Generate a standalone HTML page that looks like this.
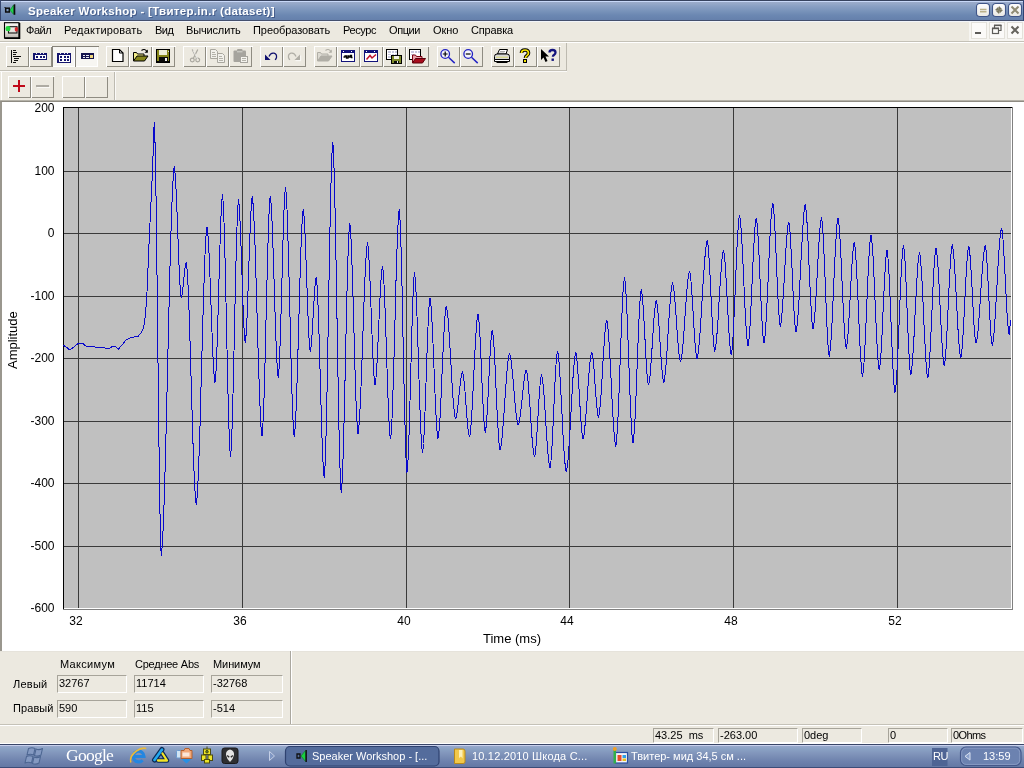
<!DOCTYPE html>
<html><head><meta charset="utf-8"><title>Speaker Workshop</title>
<style>
html,body{margin:0;padding:0;}
body{width:1024px;height:768px;overflow:hidden;position:relative;background:#ece9e0;font-family:"Liberation Sans",sans-serif;font-size:11px;color:#000;}
.abs{position:absolute;}
.t{position:absolute;white-space:nowrap;line-height:14px;}
.t,.yl,.xl,.fld{will-change:transform;}
/* title bar */
#title{left:0;top:0;width:1024px;height:21px;background:linear-gradient(#36425e 0,#36425e 1px,#c8d8f8 1px,#c8d8f8 2px,#9cacca 2px,#94a7c8 4px,#8aa0c4 6px,#7c96bc 10px,#6c88b2 15px,#6580ac 20px,#44506e 20px,#44506e 21px);}
#title .txt{left:28px;top:4px;color:#fff;font-weight:bold;font-size:11.5px;line-height:15px;letter-spacing:.31px;text-shadow:1px 1px 0 rgba(40,60,110,.6);}
.capbtn{position:absolute;top:5px;width:14px;height:13px;border-radius:3px;background:linear-gradient(#f4f4f2,#c8c8c4);border:1px solid #e9eefa;box-shadow:0 0 0 1px #50669a;}
/* menu */
#menu{left:0;top:21px;width:1024px;height:20px;background:#ece9e0;}
#menu .t{top:2px;font-size:11px;}
/* toolbars */
.btn{position:absolute;width:22px;height:21px;background:#ece9e0;border-top:1px solid #fff;border-left:1px solid #fff;border-right:1px solid #8a887e;border-bottom:1px solid #8a887e;box-sizing:border-box;}
.btn.dn{background:#f6f5f0;border-top:1px solid #8a887e;border-left:1px solid #8a887e;border-right:1px solid #fff;border-bottom:1px solid #fff;}
/* chart */
#chart{left:0;top:101px;width:1024px;height:550px;background:#fff;border-top:1px solid #8e8b82;border-left:2px solid #9a978e;box-sizing:border-box;}
.yl{position:absolute;width:54.5px;left:0;text-align:right;font-size:12px;line-height:12px;white-space:nowrap;}
.xl{position:absolute;top:615px;width:30px;text-align:center;font-size:12px;line-height:12px;white-space:nowrap;}
/* panel */
.fld{position:absolute;height:18px;box-sizing:border-box;border-top:1px solid #a7a49a;border-left:1px solid #a7a49a;border-right:1px solid #fff;border-bottom:1px solid #fff;background:#ece9e0;font-size:11px;line-height:15px;padding-left:1px;white-space:nowrap;}
/* taskbar */
#task{left:0;top:744px;width:1024px;height:24px;background:linear-gradient(#3a4668 0,#3a4668 1px,#c8d0ec 1px,#c8d0ec 2px,#98a8cc 2px,#8aa2c4 5px,#8296bc 9px,#768ab2 14px,#6c80ac 18px,#6478a4 23px,#3c4c78 23px,#3c4c78 24px);}
#task .t{color:#fff;font-size:11px;top:5px;}
</style></head><body>

<!-- TITLE BAR -->
<div id="title" class="abs">
  <div class="abs" style="left:0;top:0;width:1px;height:21px;background:#36466e"></div>
  <svg class="abs" style="left:0;top:0" width="24" height="21" viewBox="0 0 24 21">
    <rect x="5.700" y="8.200" width="3.600" height="3.800" fill="none" stroke="#0c0c0c" stroke-width="1.500"/>
    <path d="M4.500 7.500h2" stroke="#0c0c0c" stroke-width="1" stroke-dasharray="1 1"/>
    <path d="M10 10.200L13.500 5V14.300z" fill="#1ed24a" stroke="#0b8a2a" stroke-width=".7"/>
    <path d="M14.500 4.300v10.500" stroke="#0c0c0c" stroke-width="1.600"/>
  </svg>
  <div class="t txt">Speaker Workshop - [Твитер.in.r (dataset)]</div>
  <svg class="abs" style="left:960px;top:0" width="64" height="21" viewBox="960 0 64 21">
    <defs><linearGradient id="cb" x1="0" y1="0" x2="0" y2="1"><stop offset="0" stop-color="#fdfdfe"/><stop offset=".55" stop-color="#f3f3f1"/><stop offset="1" stop-color="#e9e8e2"/></linearGradient></defs>
    <rect x="1023" y="0" width="1" height="21" fill="#2f4273"/>
    <g fill="url(#cb)" stroke="#3f5589" stroke-width="1.100">
      <rect x="976.500" y="3.500" width="13" height="13" rx="3.200"/>
      <rect x="992.500" y="3.500" width="13" height="13" rx="3.200"/>
      <rect x="1008.500" y="3.500" width="13" height="13" rx="3.200"/>
    </g>
    <path d="M980 9.500h6.500M980 11.700h6.500" stroke="#b9b08a" stroke-width="1.500"/>
    <path d="M999 10V6l3.500 3.500zM999 10h4l-3.500 3.500zM999 10v4l-3.500-3.500zM999 10h-4l3.500-3.500z" fill="#7b7860"/>
    <path d="M1011.500 6.500l7 7M1018.500 6.500l-7 7" stroke="#8f8b74" stroke-width="2"/>
  </svg>
</div>

<!-- MENU BAR -->
<div class="abs" style="left:0;top:21px;width:1024px;height:1px;background:#f2f5fa;z-index:3"></div>
<div id="menu" class="abs">
  <svg class="abs" style="left:0;top:0" width="24" height="20" viewBox="0 21 24 20">
    <defs><linearGradient id="mi" x1="0" y1="0" x2="0" y2="1"><stop offset="0" stop-color="#f6f4f0"/><stop offset=".55" stop-color="#e6e2dc"/><stop offset="1" stop-color="#b9b4ae"/></linearGradient></defs>
    <rect x="4.500" y="22.700" width="14.500" height="15.300" fill="url(#mi)" stroke="#000" stroke-width="1.100"/>
    <path d="M4.500 38.300H19.500V23" fill="none" stroke="#000" stroke-width="1.600"/>
    <rect x="8.500" y="26.700" width="8.500" height="6.300" fill="none" stroke="#141414" stroke-width="1.100"/>
    <rect x="5.500" y="26" width="5" height="5.200" rx="2.300" fill="#22d63c"/>
    <rect x="14.800" y="27" width="3" height="4.500" rx="1.500" fill="#d8262a"/>
  </svg>
  <div class="t" style="left:26px;letter-spacing:-0.46px">Файл</div>
  <div class="t" style="left:63.5px;letter-spacing:0.19px">Редактировать</div>
  <div class="t" style="left:154.5px;letter-spacing:-0.47px">Вид</div>
  <div class="t" style="left:185.7px;letter-spacing:-0.15px">Вычислить</div>
  <div class="t" style="left:252.7px;letter-spacing:-0.07px">Преобразовать</div>
  <div class="t" style="left:342.6px;letter-spacing:-0.39px">Ресурс</div>
  <div class="t" style="left:389px;letter-spacing:-0.42px">Опции</div>
  <div class="t" style="left:433px;letter-spacing:-0.07px">Окно</div>
  <div class="t" style="left:471px;letter-spacing:-0.16px">Справка</div>
  <!-- mdi buttons -->
  <svg class="abs" style="left:960px;top:0" width="64" height="20" viewBox="960 21 64 20">
    <rect x="969" y="21" width="55" height="20" fill="#f6f5f1"/>
    <g fill="#fbfaf8" stroke="#e3e1da" stroke-width="1"><rect x="971.500" y="22.500" width="15" height="16"/><rect x="989.500" y="22.500" width="15" height="16"/><rect x="1007.500" y="22.500" width="15" height="16"/></g>
    <rect x="975" y="32" width="6" height="2" fill="#5c5b58"/>
    <path d="M994.500 30v-4.500h6.500v5h-2" fill="none" stroke="#5c5b58" stroke-width="1.200"/><path d="M994 25.300h7.500" stroke="#5c5b58" stroke-width="1.600"/>
    <rect x="992.500" y="28.500" width="6" height="5" fill="#fbfaf8" stroke="#5c5b58" stroke-width="1.200"/><path d="M992 28.300h7" stroke="#5c5b58" stroke-width="1.600"/>
    <path d="M1011.500 26.500l7 7M1018.500 26.500l-7 7" stroke="#66645e" stroke-width="2.100"/>
  </svg>
</div>
<div class="abs" style="left:0;top:41px;width:1024px;height:1px;background:#c9c6bc"></div>
<div class="abs" style="left:0;top:42px;width:1024px;height:1px;background:#fff"></div>

<!-- TOOLBAR 1 -->
<div id="tb1" class="abs" style="left:0;top:43px;width:1024px;height:29px;">
<svg class="abs" style="left:0;top:-2px" width="1024" height="62" viewBox="0 41 1024 62" shape-rendering="crispEdges">
<rect x="0" y="41" width="1024" height="1" fill="#c4c1b7"/><rect x="0" y="42" width="1024" height="1" fill="#fff"/>
<rect x="0" y="70" width="567" height="1" fill="#c4c1b7"/><rect x="0" y="71" width="567" height="1" fill="#fbfaf8"/>
<rect x="0" y="100" width="1024" height="1" fill="#b5b2a8"/>
<rect x="566" y="43" width="1" height="28" fill="#bdbab0"/>
<rect x="114" y="72" width="1" height="28" fill="#bdbab0"/><rect x="115" y="72" width="1" height="28" fill="#fbfaf8"/>
<rect x="1" y="72" width="1" height="28" fill="#fff"/>
<rect x="6" y="46" width="23" height="21" fill="#ece9e0"/><path d="M6 66.5V46.5H29" transform="translate(.5 0)" fill="none" stroke="#ffffff"/><path d="M6.5 66.5H28.5V46.5" fill="none" stroke="#8f8c82"/>
<rect x="29" y="46" width="23" height="21" fill="#ece9e0"/><path d="M29 66.5V46.5H52" transform="translate(.5 0)" fill="none" stroke="#ffffff"/><path d="M29.5 66.5H51.5V46.5" fill="none" stroke="#8f8c82"/>
<rect x="52" y="46" width="23" height="21" fill="#f7f6f2"/><path d="M52 66.5V46.5H75" transform="translate(.5 0)" fill="none" stroke="#86837a"/><path d="M52.5 66.5H74.5V46.5" fill="none" stroke="#ffffff"/>
<rect x="75" y="46" width="23" height="21" fill="#f7f6f2"/><path d="M75 66.5V46.5H98" transform="translate(.5 0)" fill="none" stroke="#86837a"/><path d="M75.5 66.5H97.5V46.5" fill="none" stroke="#ffffff"/>
<rect x="106" y="46" width="23" height="21" fill="#ece9e0"/><path d="M106 66.5V46.5H129" transform="translate(.5 0)" fill="none" stroke="#ffffff"/><path d="M106.5 66.5H128.5V46.5" fill="none" stroke="#8f8c82"/>
<rect x="129" y="46" width="23" height="21" fill="#ece9e0"/><path d="M129 66.5V46.5H152" transform="translate(.5 0)" fill="none" stroke="#ffffff"/><path d="M129.5 66.5H151.5V46.5" fill="none" stroke="#8f8c82"/>
<rect x="152" y="46" width="23" height="21" fill="#ece9e0"/><path d="M152 66.5V46.5H175" transform="translate(.5 0)" fill="none" stroke="#ffffff"/><path d="M152.5 66.5H174.5V46.5" fill="none" stroke="#8f8c82"/>
<rect x="183" y="46" width="23" height="21" fill="#ece9e0"/><path d="M183 66.5V46.5H206" transform="translate(.5 0)" fill="none" stroke="#ffffff"/><path d="M183.5 66.5H205.5V46.5" fill="none" stroke="#8f8c82"/>
<rect x="206" y="46" width="23" height="21" fill="#ece9e0"/><path d="M206 66.5V46.5H229" transform="translate(.5 0)" fill="none" stroke="#ffffff"/><path d="M206.5 66.5H228.5V46.5" fill="none" stroke="#8f8c82"/>
<rect x="229" y="46" width="23" height="21" fill="#ece9e0"/><path d="M229 66.5V46.5H252" transform="translate(.5 0)" fill="none" stroke="#ffffff"/><path d="M229.5 66.5H251.5V46.5" fill="none" stroke="#8f8c82"/>
<rect x="260" y="46" width="23" height="21" fill="#ece9e0"/><path d="M260 66.5V46.5H283" transform="translate(.5 0)" fill="none" stroke="#ffffff"/><path d="M260.5 66.5H282.5V46.5" fill="none" stroke="#8f8c82"/>
<rect x="283" y="46" width="23" height="21" fill="#ece9e0"/><path d="M283 66.5V46.5H306" transform="translate(.5 0)" fill="none" stroke="#ffffff"/><path d="M283.5 66.5H305.5V46.5" fill="none" stroke="#8f8c82"/>
<rect x="314" y="46" width="23" height="21" fill="#ece9e0"/><path d="M314 66.5V46.5H337" transform="translate(.5 0)" fill="none" stroke="#ffffff"/><path d="M314.5 66.5H336.5V46.5" fill="none" stroke="#8f8c82"/>
<rect x="337" y="46" width="23" height="21" fill="#ece9e0"/><path d="M337 66.5V46.5H360" transform="translate(.5 0)" fill="none" stroke="#ffffff"/><path d="M337.5 66.5H359.5V46.5" fill="none" stroke="#8f8c82"/>
<rect x="360" y="46" width="23" height="21" fill="#ece9e0"/><path d="M360 66.5V46.5H383" transform="translate(.5 0)" fill="none" stroke="#ffffff"/><path d="M360.5 66.5H382.5V46.5" fill="none" stroke="#8f8c82"/>
<rect x="383" y="46" width="23" height="21" fill="#ece9e0"/><path d="M383 66.5V46.5H406" transform="translate(.5 0)" fill="none" stroke="#ffffff"/><path d="M383.5 66.5H405.5V46.5" fill="none" stroke="#8f8c82"/>
<rect x="406" y="46" width="23" height="21" fill="#ece9e0"/><path d="M406 66.5V46.5H429" transform="translate(.5 0)" fill="none" stroke="#ffffff"/><path d="M406.5 66.5H428.5V46.5" fill="none" stroke="#8f8c82"/>
<rect x="437" y="46" width="23" height="21" fill="#ece9e0"/><path d="M437 66.5V46.5H460" transform="translate(.5 0)" fill="none" stroke="#ffffff"/><path d="M437.5 66.5H459.5V46.5" fill="none" stroke="#8f8c82"/>
<rect x="460" y="46" width="23" height="21" fill="#ece9e0"/><path d="M460 66.5V46.5H483" transform="translate(.5 0)" fill="none" stroke="#ffffff"/><path d="M460.5 66.5H482.5V46.5" fill="none" stroke="#8f8c82"/>
<rect x="491" y="46" width="23" height="21" fill="#ece9e0"/><path d="M491 66.5V46.5H514" transform="translate(.5 0)" fill="none" stroke="#ffffff"/><path d="M491.5 66.5H513.5V46.5" fill="none" stroke="#8f8c82"/>
<rect x="514" y="46" width="23" height="21" fill="#ece9e0"/><path d="M514 66.5V46.5H537" transform="translate(.5 0)" fill="none" stroke="#ffffff"/><path d="M514.5 66.5H536.5V46.5" fill="none" stroke="#8f8c82"/>
<rect x="537" y="46" width="23" height="21" fill="#ece9e0"/><path d="M537 66.5V46.5H560" transform="translate(.5 0)" fill="none" stroke="#ffffff"/><path d="M537.5 66.5H559.5V46.5" fill="none" stroke="#8f8c82"/>
<rect x="8" y="76" width="23" height="22" fill="#ece9e0"/><path d="M8 97.5V76.5H31" transform="translate(.5 0)" fill="none" stroke="#ffffff"/><path d="M8.5 97.5H30.5V76.5" fill="none" stroke="#8f8c82"/>
<rect x="31" y="76" width="23" height="22" fill="#ece9e0"/><path d="M31 97.5V76.5H54" transform="translate(.5 0)" fill="none" stroke="#ffffff"/><path d="M31.5 97.5H53.5V76.5" fill="none" stroke="#8f8c82"/>
<rect x="62" y="76" width="23" height="22" fill="#ece9e0"/><path d="M62 97.5V76.5H85" transform="translate(.5 0)" fill="none" stroke="#ffffff"/><path d="M62.5 97.5H84.5V76.5" fill="none" stroke="#8f8c82"/>
<rect x="85" y="76" width="23" height="22" fill="#ece9e0"/><path d="M85 97.5V76.5H108" transform="translate(.5 0)" fill="none" stroke="#ffffff"/><path d="M85.5 97.5H107.5V76.5" fill="none" stroke="#8f8c82"/>
<!-- b1: tree/list icon -->
<g fill="#111">
<rect x="11" y="50" width="1.400" height="13"/>
<rect x="13" y="50" width="3" height="1"/><rect x="13" y="52" width="4" height="1"/>
<rect x="13" y="54" width="3" height="1"/><rect x="13" y="56" width="8" height="1.4"/>
<rect x="14" y="58" width="5" height="1"/><rect x="14" y="60" width="4" height="1"/><rect x="13" y="62" width="3" height="1"/>
</g>
<!-- b2: ruler -->
<g>
<rect x="33" y="53" width="14" height="7" fill="#15156e"/>
<rect x="34.500" y="55" width="11" height="3.500" fill="#fff"/>
<path d="M36 57h2M39.500 57h2M43 57h2" stroke="#15156e" stroke-width="1.500"/>
<path d="M36.500 53v1M40 53v1M43.500 53v1" stroke="#e8e8f4" stroke-width="1"/>
</g>
<!-- b3: grid (pressed) -->
<g>
<rect x="57" y="53" width="14" height="10" fill="#15156e"/>
<rect x="58.500" y="55" width="11" height="6.500" fill="#fff"/>
<path d="M60 57h2M63.500 57h2M67 57h2M60 60h2M63.500 60h2M67 60h2" stroke="#15156e" stroke-width="1.500"/>
<path d="M60.500 53v1M64 53v1M67.500 53v1" stroke="#e8e8f4" stroke-width="1"/>
</g>
<!-- b4: cells (pressed) -->
<g>
<rect x="81" y="53" width="13" height="6" fill="#15154e"/>
<rect x="82.5" y="54.5" width="2.5" height="3" fill="#e8e8f4"/>
<rect x="86.3" y="54.5" width="2.5" height="3" fill="#e8e8f4"/>
<rect x="90" y="54.5" width="3" height="3" fill="#f0d880"/>
<path d="M82.5 56.5h2.5M86.3 56.5h2.5" stroke="#15154e" stroke-width="1"/>
</g>
<!-- b5: new doc -->
<path d="M112.5 49.5h7l3.5 3.5v8.500h-10.500z" fill="#fff" stroke="#000" stroke-width="1.2" shape-rendering="geometricPrecision"/>
<path d="M119.5 49.5v3.500h3.500" fill="none" stroke="#000" stroke-width="1" shape-rendering="geometricPrecision"/>
<!-- b6: open -->
<g shape-rendering="geometricPrecision">
<path d="M133.500 61v-8.500h3l1 1.500h6.500v2" fill="#f2ec88" stroke="#000" stroke-width="1"/>
<path d="M133.500 61l3.500-5h11l-3.500 5z" fill="#86861a" stroke="#000" stroke-width="1"/>
<path d="M141.500 50.500q3-2.500 5.500 1" fill="none" stroke="#000" stroke-width="1.100"/>
<path d="M147.800 49.500v3.300h-3.300z" fill="#000"/>
</g>
<!-- b7: save -->
<g>
<rect x="156.500" y="49.500" width="13" height="12.500" fill="#86861a" stroke="#000" stroke-width="1.200"/>
<rect x="159" y="50" width="8" height="5" fill="#eeeed8"/>
<rect x="158.500" y="57" width="9" height="5" fill="#0a0a0a"/>
<rect x="164.500" y="58.300" width="2" height="3" fill="#f4f4f4"/>
<rect x="168" y="50.500" width="1" height="1.500" fill="#ddd"/>
</g>
<!-- b8: cut (disabled) -->
<g shape-rendering="geometricPrecision" fill="none" stroke="#a9a79f" stroke-width="1.200">
<path d="M192.200 49.500l4.300 8.500M197.800 49.500l-4.300 8.500"/>
<circle cx="192.300" cy="60" r="1.900"/><circle cx="197.700" cy="60" r="1.900"/>
</g>
<g shape-rendering="geometricPrecision" fill="none" stroke="#fff" stroke-width=".8" opacity=".9">
<path d="M193.200 50.500l4.300 8.500"/>
</g>
<!-- b9: copy (disabled) -->
<g shape-rendering="geometricPrecision">
<path d="M210.500 49.500h5l2 2v7h-7z" fill="#f2f1ec" stroke="#a9a79f" stroke-width="1"/>
<path d="M212 52.500h3M212 54.500h4M212 56.500h4" stroke="#b4b2aa" stroke-width="1"/>
<path d="M217.500 53.500h5l2 2v7h-7z" fill="#f2f1ec" stroke="#a9a79f" stroke-width="1"/>
<path d="M219 56.500h3M219 58.500h4M219 60.500h4" stroke="#b4b2aa" stroke-width="1"/>
</g>
<!-- b10: paste (disabled) -->
<g shape-rendering="geometricPrecision">
<rect x="233.500" y="50.500" width="12.500" height="11.500" rx="1" fill="#a6a49e"/>
<rect x="237" y="49" width="5.500" height="2.500" rx="1" fill="#a6a49e"/>
<path d="M237 51.800h5.500" stroke="#d8d6d0" stroke-width="1"/>
<rect x="240.500" y="56.500" width="7" height="6" fill="#f4f3ee" stroke="#a6a49e" stroke-width="1"/>
<path d="M242 58.500h4M242 60.500h4" stroke="#b4b2aa" stroke-width="1"/>
</g>
<!-- b11: undo -->
<g shape-rendering="geometricPrecision">
<path d="M269 56.500q1.500-4 5-3.300q3 1 2.500 4.300q-.5 1.700-1.500 2.300" fill="none" stroke="#10106e" stroke-width="1.250"/>
<path d="M265 54.500l0 5.500l5.500 0z" fill="#10106e"/>
</g>
<!-- b12: redo (disabled) -->
<g shape-rendering="geometricPrecision">
<path d="M296 56.500q-1.500-4-5-3.300q-3 1-2.500 4.300q.5 1.700 1.500 2.300" fill="none" stroke="#b0aea6" stroke-width="1.250"/>
<path d="M300 54.500l0 5.500l-5.500 0z" fill="#b0aea6"/>
<path d="M300.700 55.500l0 5.200l-5.200 0" fill="none" stroke="#fff" stroke-width=".8"/>
</g>
<!-- b13: open (disabled) -->
<g shape-rendering="geometricPrecision">
<path d="M317.500 61v-8.500h3l1 1.500h6.500v2" fill="#dcdad2" stroke="#b0aea6" stroke-width="1"/>
<path d="M317.500 61l3.500-5h11l-3.500 5z" fill="#b0aea6" stroke="#b0aea6" stroke-width="1"/>
<path d="M325.500 50.500q3-2.500 5.500 1" fill="none" stroke="#b0aea6" stroke-width="1.100"/>
<path d="M331.800 49.500v3.300h-3.300z" fill="#b0aea6"/>
</g>
<!-- b14: window with wave -->
<g>
<rect x="341.500" y="50.500" width="13" height="11" fill="#fff" stroke="#12127a" stroke-width="1.400"/>
<rect x="341" y="50" width="14" height="3" fill="#12127a"/>
<rect x="343" y="51" width="1.200" height="1" fill="#fff"/><rect x="351" y="51" width="1.200" height="1" fill="#fff"/>
<path d="M343.500 57h1.500v-1h1.500v2h1.500v-2h1v1h1.500v-1.500h1v2h1" fill="none" stroke="#000" stroke-width="1.300" shape-rendering="geometricPrecision"/>
</g>
<!-- b15: window with red line -->
<g>
<rect x="364.500" y="50.500" width="13" height="11" fill="#fff" stroke="#12127a" stroke-width="1.400"/>
<rect x="364" y="50" width="14" height="3" fill="#12127a"/>
<rect x="366" y="51" width="1.200" height="1" fill="#fff"/><rect x="374" y="51" width="1.200" height="1" fill="#fff"/>
<path d="M366.500 59.500l3.500-4l2 2.500l4-3.500" fill="none" stroke="#c0102a" stroke-width="1.500" shape-rendering="geometricPrecision"/>
</g>
<!-- b16: sheet + floppy -->
<g>
<rect x="386.500" y="49.500" width="11" height="9.500" fill="#fff" stroke="#000" stroke-width="1"/>
<path d="M388 52h2.500M391.500 52h2.500M395 52h1.500M388 54.500h2.500M391.500 54.500h2.500M395 54.500h1.500M388 57h2.500" stroke="#c8c8e0" stroke-width="1.200"/>
<rect x="391.500" y="55.500" width="9.500" height="8" fill="#7e8a2a" stroke="#000" stroke-width="1"/>
<rect x="393.500" y="56" width="5" height="3" fill="#f2f2e6"/>
<rect x="393.500" y="60.500" width="5.500" height="3" fill="#0a0a0a"/>
<rect x="397" y="61.300" width="1.300" height="2" fill="#eee"/>
</g>
<!-- b17: sheet + red folder -->
<g>
<rect x="409.500" y="49.500" width="11" height="9.500" fill="#fff" stroke="#000" stroke-width="1"/>
<path d="M411 52h2.500M414.500 52h2.500M418 52h1.500M411 54.500h2.500" stroke="#c8c8e0" stroke-width="1.200"/>
<g shape-rendering="geometricPrecision">
<path d="M412.500 63v-8h3l1 1.500h5.500v2" fill="#e8a0a8" stroke="#7a0010" stroke-width="1"/>
<path d="M412.500 63l3-4.500h10l-3 4.500z" fill="#a80c1c" stroke="#5a0008" stroke-width="1"/>
</g>
</g>
<!-- b18: zoom in -->
<g shape-rendering="geometricPrecision">
<circle cx="445.200" cy="54" r="4.300" fill="#f4f4fa" stroke="#2222c4" stroke-width="1.300"/>
<path d="M448.500 57.300l6.200 5.800" stroke="#2222c4" stroke-width="1.500"/>
<path d="M442.800 54h4.800M445.200 51.600v4.800" stroke="#000" stroke-width="1.200"/>
</g>
<!-- b19: zoom out -->
<g shape-rendering="geometricPrecision">
<circle cx="468.200" cy="54" r="4.300" fill="#f4f4fa" stroke="#2222c4" stroke-width="1.300"/>
<path d="M471.500 57.300l6.200 5.800" stroke="#2222c4" stroke-width="1.500"/>
<path d="M465.800 54h4.800" stroke="#000" stroke-width="1.200"/>
</g>
<!-- b20: print -->
<g shape-rendering="geometricPrecision">
<path d="M497.500 54l2-4.500h8l-1.500 4.500z" fill="#fff" stroke="#000" stroke-width="1"/>
<path d="M500 51.500h5M499.300 53h5" stroke="#888" stroke-width=".7"/>
<path d="M494.500 56.500q0-2.500 2.500-2.500h10q2.500 0 2.500 2.500v3h-15z" fill="#d8d8d8" stroke="#000" stroke-width="1"/>
<path d="M494.500 59.500h15v2h-15z" fill="#fff" stroke="#000" stroke-width="1"/>
<path d="M496 57.200h12" stroke="#d8d870" stroke-width="1"/>
<path d="M496.500 62.500h11" stroke="#000" stroke-width="1"/>
</g>
<!-- b21: help ? -->
<g shape-rendering="geometricPrecision">
<path d="M521.500 53q0-3 3.500-3t3.500 3q0 1.600-1.500 2.600t-1.500 2.400" fill="none" stroke="#000" stroke-width="3.600"/>
<path d="M521.500 53q0-3 3.500-3t3.500 3q0 1.600-1.500 2.600t-1.500 2.400" fill="none" stroke="#f4e400" stroke-width="1.700"/>
<rect x="523.500" y="59.500" width="3" height="3" fill="#f4e400" stroke="#000" stroke-width="1"/>
</g>
<!-- b22: context help -->
<g shape-rendering="geometricPrecision">
<path d="M541 49v11l2.500-2.500l2 4.500l2-1l-2-4.500h3.500z" fill="#000"/>
<path d="M549.500 52.500q0-2.500 3-2.500t3 2.500q0 1.400-1.300 2.200t-1.300 2" fill="none" stroke="#14147e" stroke-width="2.300"/>
<rect x="551.500" y="58.500" width="2.400" height="2.400" fill="#14147e"/>
</g>
<!-- tb2 + -->
<g>
<rect x="18" y="80" width="2" height="12" fill="#c00818"/>
<rect x="13" y="85" width="12" height="2" fill="#c00818"/>
</g>
<!-- tb2 - (disabled) -->
<rect x="35.500" y="84.700" width="13" height="2" fill="#aeaba3"/>
<rect x="36.500" y="86.700" width="13" height="1" fill="#faf9f6"/>

</svg>
</div>
<!-- TOOLBAR 2 -->
<div id="tb2" class="abs" style="left:0;top:72px;width:1024px;height:29px;">

</div>

<!-- CHART -->
<div id="chart" class="abs"></div>
<svg class="abs" style="left:0;top:0" width="1024" height="768" viewBox="0 0 1024 768">
  <rect x="64" y="108" width="947" height="500" fill="#c0c0c0"/>
  <g shape-rendering="crispEdges" stroke="#3a3a3a" stroke-width="1">
    <path d="M78.5 108V608M242.5 108V608M406.5 108V608M569.5 108V608M733.5 108V608M897.5 108V608"/>
    <path d="M64 171.5H1011M64 233.5H1011M64 296.5H1011M64 358.5H1011M64 421.5H1011M64 483.5H1011M64 546.5H1011"/>
  </g>
  <g shape-rendering="crispEdges">
    <path d="M63.5 107V609" stroke="#000" stroke-width="1"/>
    <path d="M63 107.5H1012" stroke="#000" stroke-width="1"/>
    <path d="M1012.5 107V610" stroke="#808080" stroke-width="1"/>
    <path d="M63 609.5H1013" stroke="#808080" stroke-width="1"/>
  </g>
  <polyline fill="none" stroke="#0808cc" stroke-width="1" stroke-linejoin="round" shape-rendering="crispEdges" points="63.0,345.0 66.0,347.0 70.0,350.0 74.0,347.0 78.0,343.5 82.0,343.0 86.0,346.0 90.0,347.0 94.0,346.5 98.0,348.0 102.0,347.0 106.0,348.5 110.0,348.0 113.0,346.0 116.0,347.0 118.5,349.0 122.0,345.0 126.0,340.0 130.0,338.0 134.0,337.0 138.0,336.5 141.0,333.0 143.5,328.0 145.5,315.0 147.0,292.0 149.5,233.0 152.5,171.0 154.2,122.0 154.8,132.5 155.2,151.6 155.8,178.4 156.2,212.1 156.8,251.1 157.2,294.0 157.8,338.8 158.2,383.5 158.8,426.4 159.2,465.4 159.8,499.1 160.2,525.9 160.8,545.0 161.2,555.5 161.8,551.4 162.2,545.0 162.8,536.4 163.2,525.7 163.8,513.0 164.2,498.4 164.8,482.1 165.2,464.3 165.8,445.2 166.2,425.1 166.8,404.1 167.2,382.6 167.8,360.9 168.2,339.1 168.8,317.6 169.2,296.7 169.8,276.5 170.2,257.5 170.8,239.7 171.2,223.4 171.8,208.8 172.2,196.1 172.8,185.4 173.2,176.8 173.8,170.4 174.2,166.2 174.8,169.4 175.2,175.2 175.8,183.3 176.2,193.5 176.8,205.3 177.2,218.3 177.8,231.9 178.2,245.4 178.8,258.4 179.2,270.2 179.8,280.4 180.2,288.6 180.8,294.3 181.2,297.5 181.8,296.1 182.2,293.4 182.8,289.5 183.2,284.8 183.8,279.8 184.2,274.7 184.8,270.0 185.2,266.1 185.8,263.4 186.2,262.0 186.8,265.6 187.2,271.6 187.8,279.9 188.2,290.3 188.8,302.6 189.2,316.6 189.8,332.1 190.2,348.6 190.8,365.9 191.2,383.5 191.8,401.1 192.2,418.4 192.8,434.9 193.2,450.4 193.8,464.4 194.2,476.7 194.8,487.1 195.2,495.4 195.8,501.4 196.2,505.0 196.7,501.3 197.2,495.4 197.7,487.4 198.2,477.2 198.7,465.2 199.2,451.5 199.7,436.2 200.2,419.8 200.6,402.4 201.1,384.4 201.6,366.0 202.1,347.6 202.6,329.6 203.1,312.2 203.6,295.8 204.1,280.5 204.6,266.8 205.0,254.8 205.5,244.6 206.0,236.6 206.5,230.7 207.0,227.0 207.5,230.1 208.0,235.6 208.5,243.3 209.0,253.0 209.5,264.4 210.0,277.1 210.5,290.7 211.0,304.8 211.5,318.8 212.0,332.4 212.5,345.1 213.0,356.5 213.5,366.2 214.0,373.9 214.5,379.4 215.0,382.5 215.5,378.4 216.0,371.0 216.5,360.7 217.0,347.7 217.5,332.5 218.0,315.7 218.5,297.8 219.0,279.7 219.5,261.8 220.0,245.0 220.5,229.8 221.0,216.8 221.5,206.5 222.0,199.1 222.5,195.0 223.0,200.3 223.5,209.5 224.0,222.4 224.5,238.7 225.0,257.8 225.5,279.1 226.0,302.0 226.5,325.6 227.0,349.3 227.5,372.1 228.0,393.5 228.5,412.6 229.0,428.8 229.5,441.8 230.0,451.0 230.5,456.2 231.0,451.1 231.5,442.0 232.0,429.4 232.5,413.4 233.0,394.7 233.5,373.8 234.0,351.3 234.5,328.1 235.0,304.9 235.5,282.5 236.0,261.6 236.5,242.8 237.0,226.9 237.5,214.2 238.0,205.2 238.5,200.0 239.0,203.5 239.5,209.7 239.9,218.5 240.4,229.6 240.9,242.4 241.4,256.5 241.9,271.2 242.4,286.0 242.8,300.1 243.3,312.9 243.8,324.0 244.3,332.8 244.8,339.0 245.2,342.5 245.8,338.9 246.2,332.5 246.8,323.5 247.2,312.1 247.8,298.9 248.2,284.5 248.8,269.4 249.2,254.3 249.8,239.8 250.2,226.6 250.8,215.3 251.2,206.2 251.8,199.8 252.2,196.2 252.7,199.8 253.2,205.7 253.7,213.9 254.2,224.2 254.7,236.4 255.2,250.2 255.7,265.5 256.1,281.8 256.6,298.8 257.1,316.2 257.6,333.7 258.1,350.7 258.6,367.0 259.1,382.3 259.6,396.1 260.1,408.3 260.5,418.6 261.0,426.8 261.5,432.7 262.0,436.2 262.5,431.4 263.0,422.9 263.5,411.1 264.1,396.1 264.6,378.6 265.1,359.0 265.6,338.0 266.1,316.2 266.6,294.5 267.2,273.5 267.7,253.9 268.2,236.4 268.7,221.4 269.2,209.6 269.7,201.1 270.2,196.2 270.8,199.9 271.2,206.3 271.8,215.3 272.2,226.5 272.8,239.8 273.2,254.6 273.8,270.5 274.2,286.9 274.8,303.3 275.2,319.2 275.8,334.0 276.2,347.2 276.8,358.5 277.2,367.5 277.8,373.8 278.2,377.5 278.8,372.9 279.3,364.5 279.8,352.8 280.3,338.0 280.8,320.9 281.4,302.1 281.9,282.5 282.4,262.9 282.9,244.1 283.4,227.0 283.9,212.2 284.5,200.5 285.0,192.1 285.5,187.5 286.0,191.8 286.5,199.1 287.0,209.2 287.4,221.9 287.9,237.0 288.4,254.0 288.9,272.6 289.4,292.1 289.9,312.2 290.4,332.4 290.8,351.9 291.3,370.5 291.8,387.5 292.3,402.6 292.8,415.3 293.3,425.4 293.8,432.7 294.2,437.0 294.8,433.1 295.2,426.4 295.8,417.2 296.2,405.6 296.8,391.8 297.2,376.3 297.8,359.3 298.2,341.5 298.8,323.1 299.2,304.8 299.8,286.9 300.2,270.0 300.8,254.4 301.2,240.7 301.8,229.0 302.2,219.8 302.8,213.2 303.2,209.2 303.8,212.7 304.2,218.9 304.8,227.8 305.2,238.8 305.8,251.6 306.2,265.7 306.8,280.4 307.2,295.1 307.8,309.1 308.2,321.9 308.8,333.0 309.2,341.8 309.8,348.0 310.2,351.5 310.8,349.2 311.2,345.0 311.8,339.0 312.2,331.6 312.8,323.2 313.2,314.2 313.8,305.3 314.2,296.9 314.8,289.5 315.2,283.5 315.8,279.3 316.2,277.0 316.8,281.1 317.2,288.1 317.8,298.1 318.2,310.6 318.8,325.3 319.2,341.7 319.8,359.3 320.2,377.5 320.8,395.7 321.2,413.3 321.8,429.7 322.2,444.4 322.8,456.9 323.2,466.9 323.8,473.9 324.2,478.0 324.8,471.8 325.2,461.0 325.8,446.0 326.2,427.1 326.8,404.8 327.2,379.8 327.8,352.7 328.2,324.4 328.8,295.6 329.2,267.3 329.8,240.2 330.2,215.2 330.8,192.9 331.2,174.0 331.8,159.0 332.2,148.2 332.8,142.0 333.2,148.5 333.8,159.7 334.2,175.4 334.8,195.2 335.2,218.4 335.8,244.6 336.2,272.9 336.8,302.5 337.2,332.5 337.8,362.1 338.2,390.4 338.8,416.6 339.2,439.8 339.8,459.6 340.2,475.3 340.8,486.5 341.2,493.0 341.8,488.0 342.2,479.4 342.8,467.3 343.2,452.1 343.8,434.2 344.2,414.1 344.8,392.3 345.2,369.6 345.8,346.4 346.2,323.7 346.8,301.9 347.2,281.8 347.8,263.9 348.2,248.7 348.8,236.6 349.2,228.0 349.8,223.0 350.3,227.3 350.8,234.7 351.3,245.1 351.8,258.2 352.3,273.6 352.8,290.8 353.4,309.3 353.9,328.4 354.4,347.5 354.9,365.9 355.4,383.1 355.9,398.5 356.5,411.6 357.0,422.1 357.5,429.5 358.0,433.8 358.5,430.7 359.0,425.6 359.5,418.5 360.0,409.6 360.5,399.1 361.0,387.1 361.5,374.0 362.0,360.1 362.5,345.7 363.0,331.1 363.5,316.6 364.0,302.7 364.5,289.6 365.0,277.7 365.5,267.1 366.0,258.2 366.5,251.1 367.0,246.0 367.5,243.0 368.0,246.1 368.5,251.7 369.0,259.5 369.5,269.4 370.0,280.9 370.5,293.6 371.0,307.1 371.5,320.9 372.0,334.4 372.5,347.1 373.0,358.6 373.5,368.5 374.0,376.3 374.5,381.9 375.0,385.0 375.5,382.4 376.0,377.7 376.5,371.2 377.0,363.0 377.5,353.3 378.0,342.7 378.5,331.4 379.0,319.9 379.5,308.6 380.0,297.9 380.5,288.3 381.0,280.1 381.5,273.5 382.0,268.9 382.5,266.2 383.0,269.7 383.5,275.8 384.0,284.4 384.5,295.1 385.0,307.8 385.5,321.9 386.0,337.0 386.5,352.6 387.0,368.3 387.5,383.4 388.0,397.5 388.5,410.1 389.0,420.9 389.5,429.4 390.0,435.5 390.5,439.0 391.0,435.1 391.5,428.4 392.0,419.0 392.4,407.3 392.9,393.4 393.4,377.7 393.9,360.7 394.4,342.6 394.9,324.1 395.4,305.6 395.8,287.6 396.3,270.5 396.8,254.8 397.3,241.0 397.8,229.2 398.3,219.9 398.8,213.2 399.2,209.2 399.7,214.6 400.2,223.8 400.7,236.9 401.2,253.3 401.7,272.5 402.2,294.0 402.6,317.0 403.1,340.9 403.6,364.7 404.1,387.8 404.6,409.2 405.1,428.5 405.5,444.9 406.0,457.9 406.5,467.2 407.0,472.5 407.5,468.1 408.0,460.3 408.5,449.3 409.0,435.5 409.5,419.3 410.0,401.4 410.5,382.4 411.0,363.1 411.5,344.1 412.0,326.2 412.5,310.0 413.0,296.2 413.5,285.2 414.0,277.4 414.5,273.0 415.0,276.6 415.5,283.0 416.0,291.9 416.5,303.1 417.0,316.2 417.5,330.9 418.0,346.7 418.5,363.0 419.0,379.3 419.5,395.1 420.0,409.8 420.5,422.9 421.0,434.1 421.5,443.0 422.0,449.4 422.5,453.0 423.0,449.6 423.5,443.5 424.0,435.0 424.5,424.2 425.0,411.7 425.5,397.8 426.0,383.0 426.5,368.0 427.0,353.2 427.5,339.3 428.0,326.8 428.5,316.0 429.0,307.5 429.5,301.4 430.0,298.0 430.5,300.8 431.0,305.8 431.5,312.7 432.0,321.5 432.5,331.8 433.0,343.2 433.5,355.5 434.0,368.2 434.5,381.0 435.0,393.3 435.5,404.7 436.0,415.0 436.5,423.8 437.0,430.7 437.5,435.7 438.0,438.5 438.5,435.8 439.0,431.2 439.5,424.6 440.1,416.4 440.6,406.7 441.1,395.9 441.6,384.3 442.1,372.4 442.6,360.4 443.2,348.8 443.7,338.0 444.2,328.4 444.7,320.1 445.2,313.6 445.7,308.9 446.2,306.2 446.8,308.2 447.3,311.5 447.8,316.1 448.3,321.8 448.8,328.6 449.3,336.3 449.8,344.7 450.4,353.5 450.9,362.6 451.4,371.7 451.9,380.6 452.4,388.9 452.9,396.6 453.4,403.4 454.0,409.2 454.5,413.8 455.0,417.1 455.5,419.0 456.0,417.9 456.5,415.8 457.0,412.9 457.5,409.2 458.0,405.0 458.5,400.4 459.0,395.5 459.5,390.6 460.0,386.0 460.5,381.8 461.0,378.1 461.5,375.2 462.0,373.1 462.5,372.0 463.0,373.6 463.5,376.4 464.0,380.5 464.5,385.5 465.0,391.4 465.5,397.8 466.0,404.5 466.5,411.2 467.0,417.6 467.5,423.5 468.0,428.5 468.5,432.6 469.0,435.4 469.5,437.0 470.0,434.7 470.5,430.8 471.0,425.3 471.5,418.4 472.0,410.3 472.5,401.1 473.0,391.2 473.5,380.9 474.0,370.4 474.5,360.0 475.0,350.1 475.5,341.0 476.0,332.8 476.5,325.9 477.0,320.5 477.5,316.5 478.0,314.2 478.5,317.1 479.0,322.3 479.6,329.6 480.1,338.8 480.6,349.5 481.1,361.2 481.6,373.4 482.1,385.6 482.7,397.3 483.2,407.9 483.7,417.1 484.2,424.4 484.7,429.6 485.2,432.5 485.8,430.0 486.2,425.5 486.8,419.2 487.2,411.2 487.8,402.0 488.2,391.8 488.8,381.2 489.2,370.7 489.8,360.5 490.2,351.3 490.8,343.3 491.2,337.0 491.8,332.5 492.2,330.0 492.7,332.4 493.2,336.7 493.7,342.6 494.2,350.1 494.7,358.8 495.2,368.6 495.6,379.1 496.1,390.0 496.6,400.9 497.1,411.4 497.6,421.2 498.1,429.9 498.5,437.4 499.0,443.3 499.5,447.6 500.0,450.0 500.5,448.5 501.0,445.9 501.5,442.3 502.0,437.8 502.5,432.5 503.0,426.5 503.5,419.9 504.0,412.8 504.5,405.6 505.0,398.2 505.5,390.9 506.0,383.9 506.5,377.3 507.0,371.2 507.5,365.9 508.0,361.4 508.5,357.9 509.0,355.3 509.5,353.8 510.0,355.0 510.5,357.1 511.0,359.9 511.4,363.6 511.9,367.9 512.4,372.8 512.9,378.0 513.4,383.6 513.9,389.4 514.4,395.1 514.8,400.7 515.3,406.0 515.8,410.9 516.3,415.2 516.8,418.8 517.3,421.7 517.8,423.8 518.2,425.0 518.8,423.9 519.2,422.0 519.8,419.2 520.2,415.8 520.8,411.8 521.2,407.3 521.8,402.5 522.2,397.5 522.8,392.5 523.2,387.7 523.8,383.2 524.2,379.2 524.8,375.8 525.2,373.0 525.8,371.1 526.2,370.0 526.8,371.8 527.3,374.8 527.8,379.1 528.3,384.5 528.8,390.9 529.3,398.0 529.9,405.6 530.4,413.5 530.9,421.4 531.4,429.0 531.9,436.1 532.4,442.5 533.0,447.9 533.5,452.2 534.0,455.2 534.5,457.0 535.0,455.0 535.5,451.4 536.0,446.3 536.5,440.0 537.0,432.6 537.5,424.5 538.0,416.0 538.5,407.5 539.0,399.4 539.5,392.0 540.0,385.7 540.5,380.6 541.0,377.0 541.5,375.0 542.0,376.7 542.5,379.7 543.0,383.9 543.5,389.1 544.0,395.3 544.5,402.2 545.0,409.7 545.5,417.5 546.0,425.5 546.5,433.3 547.0,440.8 547.5,447.7 548.0,453.9 548.5,459.1 549.0,463.3 549.5,466.3 550.0,468.0 550.5,465.4 551.0,460.8 551.5,454.4 552.0,446.3 552.5,436.9 553.0,426.4 553.5,415.3 554.0,404.0 554.5,392.9 555.0,382.4 555.5,372.9 556.0,364.8 556.5,358.4 557.0,353.8 557.5,351.2 558.0,353.3 558.5,356.8 559.0,361.7 559.4,367.9 559.9,375.2 560.4,383.4 560.9,392.4 561.4,401.9 561.9,411.6 562.4,421.4 562.8,430.8 563.3,439.8 563.8,448.0 564.3,455.3 564.8,461.5 565.3,466.4 565.8,469.9 566.2,472.0 566.8,470.1 567.2,466.9 567.8,462.5 568.2,456.9 568.8,450.3 569.2,442.8 569.8,434.6 570.2,425.9 570.8,416.8 571.2,407.7 571.8,398.6 572.2,389.9 572.8,381.7 573.2,374.2 573.8,367.6 574.2,362.0 574.8,357.6 575.2,354.4 575.8,352.5 576.3,354.6 576.8,358.4 577.3,363.7 577.8,370.4 578.3,378.2 578.9,386.7 579.4,395.6 579.9,404.5 580.4,413.1 580.9,420.8 581.4,427.5 582.0,432.9 582.5,436.7 583.0,438.8 583.5,437.3 584.0,434.7 584.5,431.2 584.9,426.8 585.4,421.5 585.9,415.6 586.4,409.2 586.9,402.4 587.4,395.4 587.9,388.4 588.3,381.6 588.8,375.1 589.3,369.2 589.8,364.0 590.3,359.5 590.8,356.0 591.3,353.5 591.8,352.0 592.2,353.6 592.7,356.5 593.2,360.5 593.7,365.6 594.2,371.5 594.6,378.0 595.1,384.8 595.6,391.5 596.1,398.0 596.6,403.9 597.1,409.0 597.5,413.0 598.0,415.9 598.5,417.5 599.0,415.5 599.5,412.1 600.0,407.3 600.6,401.2 601.1,394.1 601.6,386.1 602.1,377.6 602.6,368.8 603.1,359.9 603.7,351.4 604.2,343.4 604.7,336.3 605.2,330.2 605.7,325.4 606.2,322.0 606.8,320.0 607.2,322.2 607.8,325.9 608.2,331.0 608.8,337.4 609.2,345.1 609.8,353.7 610.2,363.0 610.8,373.0 611.2,383.1 611.8,393.3 612.2,403.2 612.8,412.6 613.2,421.2 613.8,428.8 614.2,435.3 614.8,440.4 615.2,444.1 615.8,446.2 616.2,443.4 616.7,438.5 617.2,431.6 617.7,423.0 618.2,412.9 618.7,401.4 619.2,388.9 619.6,375.7 620.1,362.1 620.6,348.6 621.1,335.4 621.6,322.9 622.1,311.4 622.6,301.2 623.0,292.6 623.5,285.8 624.0,280.9 624.5,278.0 625.0,281.1 625.5,286.3 626.0,293.7 626.5,303.0 627.0,313.9 627.5,326.2 628.0,339.5 628.5,353.4 629.0,367.6 629.5,381.5 630.0,394.8 630.5,407.1 631.0,418.0 631.5,427.3 632.0,434.7 632.5,439.9 633.0,443.0 633.5,439.9 634.0,434.5 634.5,426.9 635.1,417.3 635.6,406.1 636.1,393.6 636.6,380.1 637.1,366.2 637.6,352.4 638.2,338.9 638.7,326.4 639.2,315.2 639.7,305.6 640.2,298.0 640.7,292.6 641.2,289.5 641.8,291.8 642.3,296.0 642.8,301.9 643.3,309.3 643.8,317.9 644.4,327.4 644.9,337.2 645.4,347.1 645.9,356.6 646.4,365.2 646.9,372.6 647.5,378.5 648.0,382.7 648.5,385.0 649.0,383.3 649.5,380.3 650.0,376.1 650.4,370.9 650.9,364.7 651.4,357.8 651.9,350.4 652.4,342.8 652.9,335.1 653.3,327.7 653.8,320.8 654.3,314.6 654.8,309.4 655.3,305.2 655.8,302.2 656.2,300.5 656.8,302.3 657.2,305.5 657.8,310.0 658.2,315.7 658.8,322.4 659.2,329.7 659.8,337.5 660.2,345.5 660.8,353.3 661.2,360.6 661.8,367.3 662.2,373.0 662.8,377.5 663.2,380.7 663.8,382.5 664.2,380.8 664.7,377.9 665.2,373.9 665.7,368.8 666.2,362.8 666.7,356.0 667.2,348.6 667.6,340.8 668.1,332.8 668.6,324.7 669.1,316.9 669.6,309.5 670.1,302.7 670.6,296.7 671.0,291.6 671.5,287.6 672.0,284.7 672.5,283.0 673.0,284.6 673.5,287.4 674.0,291.3 674.5,296.2 675.0,302.0 675.5,308.4 676.0,315.3 676.5,322.5 677.0,329.7 677.5,336.6 678.0,343.0 678.5,348.8 679.0,353.7 679.5,357.6 680.0,360.4 680.5,362.0 681.0,360.4 681.5,357.8 682.0,354.1 682.5,349.5 683.0,344.0 683.5,337.8 684.0,331.1 684.5,323.9 685.0,316.6 685.5,309.3 686.0,302.2 686.5,295.4 687.0,289.3 687.5,283.8 688.0,279.1 688.5,275.5 689.0,272.8 689.5,271.2 690.0,273.2 690.5,276.6 691.0,281.4 691.5,287.5 692.0,294.6 692.5,302.4 693.0,310.8 693.5,319.2 694.0,327.6 694.5,335.4 695.0,342.5 695.5,348.6 696.0,353.4 696.5,356.8 697.0,358.8 697.5,357.0 698.0,354.1 698.5,350.0 699.0,345.0 699.6,339.0 700.1,332.2 700.6,324.6 701.1,316.6 701.6,308.2 702.1,299.6 702.6,291.0 703.1,282.6 703.7,274.6 704.2,267.1 704.7,260.3 705.2,254.3 705.7,249.2 706.2,245.2 706.7,242.3 707.2,240.5 707.8,242.9 708.2,247.3 708.8,253.4 709.2,261.1 709.8,270.0 710.2,280.0 710.8,290.5 711.2,301.2 711.8,311.8 712.2,321.7 712.8,330.7 713.2,338.4 713.8,344.5 714.2,348.8 714.8,351.2 715.2,349.5 715.7,346.6 716.2,342.5 716.7,337.3 717.2,331.3 717.7,324.4 718.2,316.9 718.6,309.0 719.1,300.9 719.6,292.8 720.1,284.9 720.6,277.4 721.1,270.5 721.6,264.4 722.0,259.3 722.5,255.2 723.0,252.2 723.5,250.5 724.0,252.6 724.5,256.3 725.0,261.5 725.4,268.0 725.9,275.6 726.4,284.1 726.9,293.3 727.4,302.8 727.9,312.2 728.3,321.4 728.8,329.9 729.3,337.5 729.8,344.0 730.3,349.2 730.8,352.9 731.2,355.0 731.8,352.2 732.3,347.3 732.8,340.4 733.3,331.7 733.8,321.5 734.3,310.1 734.9,297.9 735.4,285.2 735.9,272.6 736.4,260.4 736.9,249.0 737.4,238.8 738.0,230.1 738.5,223.2 739.0,218.3 739.5,215.5 740.0,217.9 740.5,222.1 741.0,227.9 741.5,235.2 742.0,243.9 742.5,253.6 743.0,264.1 743.5,275.1 744.0,286.2 744.5,297.2 745.0,307.7 745.5,317.4 746.0,326.0 746.5,333.3 747.0,339.2 747.5,343.3 748.0,345.8 748.5,343.2 749.0,338.7 749.5,332.3 750.1,324.4 750.6,315.1 751.1,304.6 751.6,293.4 752.1,281.9 752.6,270.3 753.2,259.1 753.7,248.7 754.2,239.4 754.7,231.4 755.2,225.1 755.7,220.6 756.2,218.0 756.7,220.5 757.2,224.9 757.7,231.1 758.2,238.9 758.7,248.0 759.2,258.2 759.6,269.2 760.1,280.5 760.6,291.8 761.1,302.8 761.6,313.0 762.1,322.1 762.5,329.9 763.0,336.1 763.5,340.5 764.0,343.0 764.5,340.6 765.0,336.5 765.5,330.8 765.9,323.7 766.4,315.2 766.9,305.7 767.4,295.3 767.9,284.3 768.4,273.0 768.9,261.7 769.3,250.7 769.8,240.3 770.3,230.8 770.8,222.3 771.3,215.2 771.8,209.5 772.3,205.4 772.8,203.0 773.2,205.7 773.8,210.5 774.2,217.3 774.8,225.9 775.2,235.9 775.8,246.9 776.2,258.7 776.8,270.6 777.2,282.3 777.8,293.4 778.2,303.4 778.8,311.9 779.2,318.7 779.8,323.5 780.2,326.2 780.8,324.3 781.2,321.0 781.8,316.3 782.2,310.5 782.8,303.5 783.2,295.8 783.8,287.4 784.2,278.6 784.8,269.7 785.2,260.9 785.8,252.5 786.2,244.7 786.8,237.8 787.2,231.9 787.8,227.3 788.2,223.9 788.8,222.0 789.3,224.7 789.8,229.5 790.3,236.3 790.8,244.9 791.3,254.8 791.9,265.6 792.4,277.0 792.9,288.4 793.4,299.2 793.9,309.1 794.4,317.7 795.0,324.5 795.5,329.3 796.0,332.0 796.5,329.8 797.0,326.1 797.5,320.9 798.1,314.4 798.6,306.7 799.1,298.0 799.6,288.5 800.1,278.5 800.6,268.2 801.1,258.0 801.7,248.0 802.2,238.5 802.7,229.8 803.2,222.1 803.7,215.6 804.2,210.4 804.7,206.7 805.2,204.5 805.7,207.0 806.2,211.4 806.7,217.5 807.2,225.3 807.7,234.4 808.2,244.5 808.6,255.4 809.1,266.6 809.6,277.9 810.1,288.8 810.6,298.9 811.1,308.0 811.5,315.7 812.0,321.9 812.5,326.2 813.0,328.8 813.5,326.7 814.0,323.2 814.5,318.2 815.0,312.0 815.5,304.6 816.0,296.4 816.5,287.5 817.0,278.1 817.5,268.6 818.0,259.3 818.5,250.4 819.0,242.1 819.5,234.8 820.0,228.5 820.5,223.6 821.0,220.1 821.5,218.0 822.0,220.8 822.5,225.7 823.0,232.5 823.4,241.1 823.9,251.2 824.4,262.5 824.9,274.6 825.4,287.1 825.9,299.6 826.3,311.7 826.8,323.0 827.3,333.1 827.8,341.7 828.3,348.6 828.8,353.5 829.2,356.2 829.7,353.9 830.2,349.8 830.7,344.2 831.2,337.2 831.7,328.8 832.2,319.4 832.7,309.1 833.1,298.3 833.6,287.1 834.1,276.0 834.6,265.1 835.1,254.9 835.6,245.4 836.1,237.1 836.5,230.0 837.0,224.4 837.5,220.4 838.0,218.0 838.5,220.6 839.0,225.2 839.5,231.7 840.1,239.8 840.6,249.3 841.1,259.9 841.6,271.3 842.1,283.1 842.6,294.9 843.2,306.3 843.7,317.0 844.2,326.5 844.7,334.6 845.2,341.0 845.7,345.6 846.2,348.2 846.8,346.1 847.2,342.4 847.8,337.2 848.2,330.6 848.8,322.8 849.2,314.2 849.8,304.9 850.2,295.4 850.8,285.8 851.2,276.5 851.8,267.9 852.2,260.2 852.8,253.6 853.2,248.4 853.8,244.6 854.2,242.5 854.8,245.2 855.3,249.9 855.8,256.5 856.3,264.9 856.8,274.6 857.3,285.6 857.9,297.3 858.4,309.4 858.9,321.5 859.4,333.2 859.9,344.1 860.4,353.9 861.0,362.2 861.5,368.8 862.0,373.6 862.5,376.2 863.0,373.6 863.5,369.1 864.0,362.8 864.5,354.9 865.0,345.5 865.5,335.0 866.0,323.6 866.5,311.7 867.0,299.6 867.5,287.7 868.0,276.3 868.5,265.8 869.0,256.4 869.5,248.4 870.0,242.1 870.5,237.6 871.0,235.0 871.5,237.7 872.0,242.5 872.5,249.2 873.1,257.6 873.6,267.4 874.1,278.5 874.6,290.3 875.1,302.5 875.6,314.7 876.2,326.5 876.7,337.6 877.2,347.4 877.7,355.8 878.2,362.5 878.7,367.3 879.2,370.0 879.7,367.6 880.2,363.4 880.7,357.5 881.2,350.0 881.7,341.3 882.2,331.5 882.6,321.1 883.1,310.2 883.6,299.4 884.1,289.0 884.6,279.2 885.1,270.5 885.5,263.0 886.0,257.1 886.5,252.9 887.0,250.5 887.5,253.4 888.0,258.4 888.5,265.4 889.0,274.2 889.5,284.6 890.0,296.2 890.5,308.6 891.0,321.5 891.5,334.4 892.0,346.8 892.5,358.4 893.0,368.8 893.5,377.6 894.0,384.6 894.5,389.6 895.0,392.5 895.5,389.8 896.0,385.1 896.5,378.5 897.0,370.2 897.5,360.5 898.0,349.5 898.5,337.7 899.0,325.3 899.5,312.7 900.0,300.3 900.5,288.5 901.0,277.5 901.5,267.8 902.0,259.5 902.5,252.9 903.0,248.2 903.5,245.5 904.0,248.6 904.5,254.3 905.1,262.4 905.6,272.4 906.1,284.1 906.6,296.9 907.1,310.2 907.6,323.6 908.2,336.4 908.7,348.1 909.2,358.1 909.7,366.2 910.2,371.9 910.8,375.0 911.2,372.9 911.7,369.3 912.2,364.4 912.7,358.1 913.2,350.7 913.7,342.3 914.2,333.2 914.6,323.6 915.1,313.8 915.6,303.9 916.1,294.3 916.6,285.2 917.1,276.8 917.6,269.4 918.0,263.1 918.5,258.2 919.0,254.6 919.5,252.5 920.0,255.0 920.5,259.5 921.0,265.7 921.6,273.5 922.1,282.7 922.6,292.9 923.1,303.9 923.6,315.2 924.1,326.6 924.7,337.6 925.2,347.8 925.7,357.0 926.2,364.8 926.7,371.0 927.2,375.5 927.8,378.0 928.3,375.4 928.8,370.8 929.3,364.4 929.8,356.3 930.3,346.8 930.8,336.2 931.4,324.9 931.9,313.1 932.4,301.4 932.9,290.0 933.4,279.4 933.9,269.9 934.5,261.9 935.0,255.4 935.5,250.9 936.0,248.2 936.5,250.6 937.0,254.8 937.5,260.6 938.1,267.8 938.6,276.4 939.1,286.0 939.6,296.3 940.1,306.9 940.6,317.5 941.2,327.8 941.7,337.3 942.2,345.9 942.7,353.2 943.2,359.0 943.7,363.1 944.2,365.5 944.8,363.1 945.2,358.8 945.8,352.8 946.2,345.3 946.8,336.4 947.2,326.5 947.8,316.0 948.2,305.0 948.8,294.0 949.2,283.5 949.8,273.6 950.2,264.7 950.8,257.2 951.2,251.2 951.8,246.9 952.2,244.5 952.8,246.6 953.2,250.2 953.8,255.3 954.2,261.7 954.8,269.2 955.2,277.7 955.8,286.8 956.2,296.4 956.8,306.1 957.2,315.7 957.8,324.8 958.2,333.3 958.8,340.8 959.2,347.2 959.8,352.3 960.2,355.9 960.8,358.0 961.2,355.7 961.8,351.8 962.2,346.3 962.8,339.3 963.2,331.1 963.8,322.0 964.2,312.2 964.8,302.1 965.2,292.0 965.8,282.2 966.2,273.1 966.8,264.9 967.2,258.0 967.8,252.4 968.2,248.5 968.8,246.2 969.3,248.6 969.8,252.9 970.3,258.9 970.8,266.4 971.3,275.1 971.9,284.7 972.4,294.8 972.9,304.8 973.4,314.4 973.9,323.1 974.4,330.6 975.0,336.6 975.5,340.9 976.0,343.2 976.5,341.6 977.0,338.7 977.5,334.8 978.1,329.8 978.6,323.9 979.1,317.2 979.6,309.9 980.1,302.3 980.6,294.4 981.1,286.5 981.7,278.8 982.2,271.6 982.7,264.9 983.2,259.0 983.7,254.0 984.2,250.0 984.7,247.2 985.2,245.5 985.8,247.9 986.2,252.3 986.8,258.5 987.2,266.3 987.8,275.3 988.2,285.2 988.8,295.5 989.2,305.8 989.8,315.7 990.2,324.7 990.8,332.5 991.2,338.7 991.8,343.1 992.2,345.5 992.8,343.5 993.3,340.1 993.8,335.3 994.3,329.3 994.8,322.2 995.3,314.2 995.8,305.5 996.4,296.3 996.9,286.9 997.4,277.4 997.9,268.2 998.4,259.5 998.9,251.5 999.4,244.4 1000.0,238.4 1000.5,233.7 1001.0,230.3 1001.5,228.2 1002.0,230.4 1002.5,234.2 1003.0,239.4 1003.4,246.1 1003.9,253.9 1004.4,262.6 1004.9,272.0 1005.4,281.6 1005.9,291.3 1006.3,300.6 1006.8,309.4 1007.3,317.2 1007.8,323.8 1008.3,329.1 1008.8,332.8 1009.2,335.0 1010.5,320.0"/>
</svg>
<div class="yl" style="top:102px">200</div>
<div class="yl" style="top:165px">100</div>
<div class="yl" style="top:227px">0</div>
<div class="yl" style="top:290px">-100</div>
<div class="yl" style="top:352px">-200</div>
<div class="yl" style="top:415px">-300</div>
<div class="yl" style="top:477px">-400</div>
<div class="yl" style="top:540px">-500</div>
<div class="yl" style="top:602px">-600</div>
<div class="xl" style="left:60.5px">32</div>
<div class="xl" style="left:224.5px">36</div>
<div class="xl" style="left:388.5px">40</div>
<div class="xl" style="left:552px">44</div>
<div class="xl" style="left:716px">48</div>
<div class="xl" style="left:879.5px">52</div>
<div class="t" style="left:483.4px;top:630.6px;font-size:13px;line-height:16px">Time (ms)</div>
<div class="t" style="left:5.6px;top:369px;font-size:13px;line-height:14px;transform-origin:0 0;transform:rotate(-90deg);">Amplitude</div>

<!-- STATS PANEL -->
<div class="abs" style="left:0;top:651px;width:1024px;height:74px;background:#ece9e0;border-top:1px solid #e6e3db;box-sizing:border-box"></div>
<div class="abs" style="left:290px;top:651px;width:1px;height:73px;background:#aaa79f"></div>
<div class="abs" style="left:291px;top:651px;width:1px;height:73px;background:#fff"></div>
<div class="t" style="left:59.7px;top:657px;font-size:11px;letter-spacing:0.3px">Максимум</div>
<div class="t" style="left:135px;top:657px;font-size:11px;letter-spacing:-0.24px">Среднее Abs</div>
<div class="t" style="left:212.5px;top:657px;font-size:11px;letter-spacing:-0.09px">Минимум</div>
<div class="t" style="left:12.8px;top:677px;font-size:11px;letter-spacing:0.25px">Левый</div>
<div class="t" style="left:12.5px;top:701px;font-size:11px;letter-spacing:0.08px">Правый</div>
<div class="fld" style="left:57px;top:675px;width:70px">32767</div>
<div class="fld" style="left:134px;top:675px;width:70px">11714</div>
<div class="fld" style="left:211px;top:675px;width:72px">-32768</div>
<div class="fld" style="left:57px;top:700px;width:70px">590</div>
<div class="fld" style="left:134px;top:700px;width:70px">115</div>
<div class="fld" style="left:211px;top:700px;width:72px">-514</div>

<!-- STATUS BAR -->
<div class="abs" style="left:0;top:724px;width:1024px;height:1px;background:#c5c2b8"></div>
<div class="abs" style="left:0;top:725px;width:1024px;height:1px;background:#fff"></div>
<div class="fld" style="left:653px;top:728px;width:61px;height:15px;line-height:13px">43.25&nbsp; ms</div>
<div class="fld" style="left:718px;top:728px;width:80px;height:15px;line-height:13px">-263.00</div>
<div class="fld" style="left:802px;top:728px;width:60px;height:15px;line-height:13px">0deg</div>
<div class="fld" style="left:888px;top:728px;width:60px;height:15px;line-height:13px">0</div>
<div class="fld" style="left:951px;top:728px;width:72px;height:15px;line-height:13px;letter-spacing:-.6px">0Ohms</div>

<div class="abs" style="left:0;top:743px;width:1024px;height:1px;background:#fff"></div>
<!-- TASKBAR -->
<div id="task" class="abs">
<svg class="abs" style="left:0;top:0" width="1024" height="24" viewBox="0 744 1024 24">
<!-- windows flag (faded) -->
<g fill="#8499c1" stroke="#4d6692" stroke-width="1.1" stroke-linejoin="round">
<path d="M28.500 748.500q3.500-1.500 6.500 0l-1.500 6.500q-3-1.500-6.500 0z"/>
<path d="M36 749q3 1.500 6.500-.5l-1.500 6.500q-3.500 2-6.500 .5z"/>
<path d="M26.500 756.500q3.500-1.500 6.500 0l-1.500 6.500q-3-1.500-6.500 0z"/>
<path d="M34 757q3 1.500 6.500-.5l-1.500 6.500q-3.500 2-6.500 .5z"/>
</g>
<!-- IE -->
<g fill="none">
<path d="M133.800 756.500H144A5.400 5.400 0 1 0 142.600 760.200" stroke="#2486e0" stroke-width="3.200"/>
<path d="M130.800 762.500q-1.800-6 5.500-11.500q5.500-3.800 10-2.500" stroke="#e9b93a" stroke-width="1.600"/>
</g>
<!-- triangle -->
<g stroke-linejoin="round" stroke-linecap="round">
<path d="M162 749.500l-7.500 10.500" stroke="#0c2a55" stroke-width="5"/>
<path d="M158 760.500h9l-4.500-7" fill="none" stroke="#0c2a55" stroke-width="4.600"/>
<path d="M162 749.500l-7.500 10.500" stroke="#22a8f0" stroke-width="2.600"/>
<path d="M158 760.500h9l-4.500-7" fill="none" stroke="#f2e428" stroke-width="2.300"/>
</g>
<!-- icon3 -->
<g>
<rect x="176.500" y="750.500" width="5" height="7.500" rx="1" fill="#cfe4f4" stroke="#6a9ad0" stroke-width="1"/>
<path d="M181 750.500h3l1-2h4l1 2h2v8h-11z" fill="#f2a878" stroke="#b06030" stroke-width="1"/>
<rect x="182.500" y="752.500" width="7" height="4" fill="#fbe6d8"/>
<path d="M181.500 759h10l-5 4.500z" fill="#2890e4"/>
</g>
<!-- qip -->
<g fill="#ece428" stroke="#4c4c10" stroke-width="1">
<path d="M207 746.500v2.500" />
<rect x="203.500" y="749" width="7" height="5.500"/>
<circle cx="207" cy="751.700" r="1.300" fill="#5a7a30"/>
<rect x="201.500" y="755" width="4.500" height="5.500"/>
<rect x="208" y="755" width="4.500" height="5.500"/>
<rect x="204.500" y="759.500" width="5" height="3.500"/>
</g>
<!-- alien -->
<g>
<rect x="222" y="748" width="16" height="15.500" rx="2.500" fill="#2e2f32" stroke="#1a1a1c" stroke-width="1"/>
<path d="M230 749.500q4.500 1 4 5.500q-.8 4-4 7q-3.200-3-4-7q-.5-4.500 4-5.500z" fill="#e4e4e4"/>
<path d="M227.200 755.500l2 1.800M232.800 755.500l-2 1.800" stroke="#2a2a2a" stroke-width="1.300"/>
</g>
<!-- chevron -->
<path d="M269.500 751.500l5 4.500l-5 4.500z" fill="#7f96c2" stroke="#c4cfe6" stroke-width="1"/>
<!-- active task button -->
<rect x="285.500" y="746.500" width="153.500" height="19.500" rx="4.500" fill="#546c9c" stroke="#2f4270" stroke-width="1.200"/>
<g>
<path d="M297 754h3v4h-3z" fill="none" stroke="#101010" stroke-width="1.300"/>
<path d="M301 756l4.500-5.500v11z" fill="#18d040" stroke="#0a7a20" stroke-width=".6"/>
<path d="M306.200 750v12" stroke="#101010" stroke-width="1.400"/>
</g>
<!-- folder icon -->
<g>
<path d="M454.500 749h8.500q2 0 2 2v11q0 1.500-2 1.500h-8.500z" fill="#f2c84a" stroke="#b88a1a" stroke-width="1"/>
<path d="M459 750v8l2-1.500l1.500 2v-8.500z" fill="#fdf0b8"/>
</g>
<!-- third icon -->
<g transform="translate(2 0)">
<rect x="613.500" y="752.500" width="12" height="10.500" fill="#f4f4f8" stroke="#2a4fa0" stroke-width="1.200"/>
<rect x="615.500" y="755" width="4" height="6" fill="#e84a28"/>
<rect x="620.500" y="755" width="3.500" height="3" fill="#30a0e8"/>
<rect x="620.500" y="758.500" width="3.500" height="2.500" fill="#e8c020"/>
<rect x="611.500" y="750" width="2.500" height="13.500" fill="#30b048"/>
<circle cx="612.800" cy="749" r="2" fill="#f2a020"/>
</g>
<!-- RU box -->
<rect x="932" y="748" width="15.500" height="18" fill="#4f6494"/>
<!-- tray -->
<rect x="960.500" y="747" width="60.500" height="18.500" rx="5.500" fill="#6c82b0" stroke="#45588a" stroke-width="1.200"/><rect x="961.700" y="748.200" width="58" height="16.200" rx="4.500" fill="none" stroke="#8ea0c6" stroke-width=".8"/>
<path d="M970 752.500l-5 3.800l5 3.800z" fill="#8aa0cc" stroke="#d8e0f0" stroke-width="1"/>
</svg>
<div class="t" style="left:66px;top:1px;font-family:'Liberation Serif',serif;font-size:17.500px;line-height:20px;letter-spacing:-.74px;color:#fff">Google</div>
<div class="t" style="left:312px">Speaker Workshop - [...</div>
<div class="t" style="left:471.6px;letter-spacing:.18px">10.12.2010 Шкода С...</div>
<div class="t" style="left:631px">Твитер- мид 34,5 см ...</div>
<div class="t" style="left:932.500px;top:5px;font-size:11px;letter-spacing:-.4px">RU</div>
<div class="t" style="left:983px;top:5px;font-size:11px">13:59</div>

</div>
</body></html>
